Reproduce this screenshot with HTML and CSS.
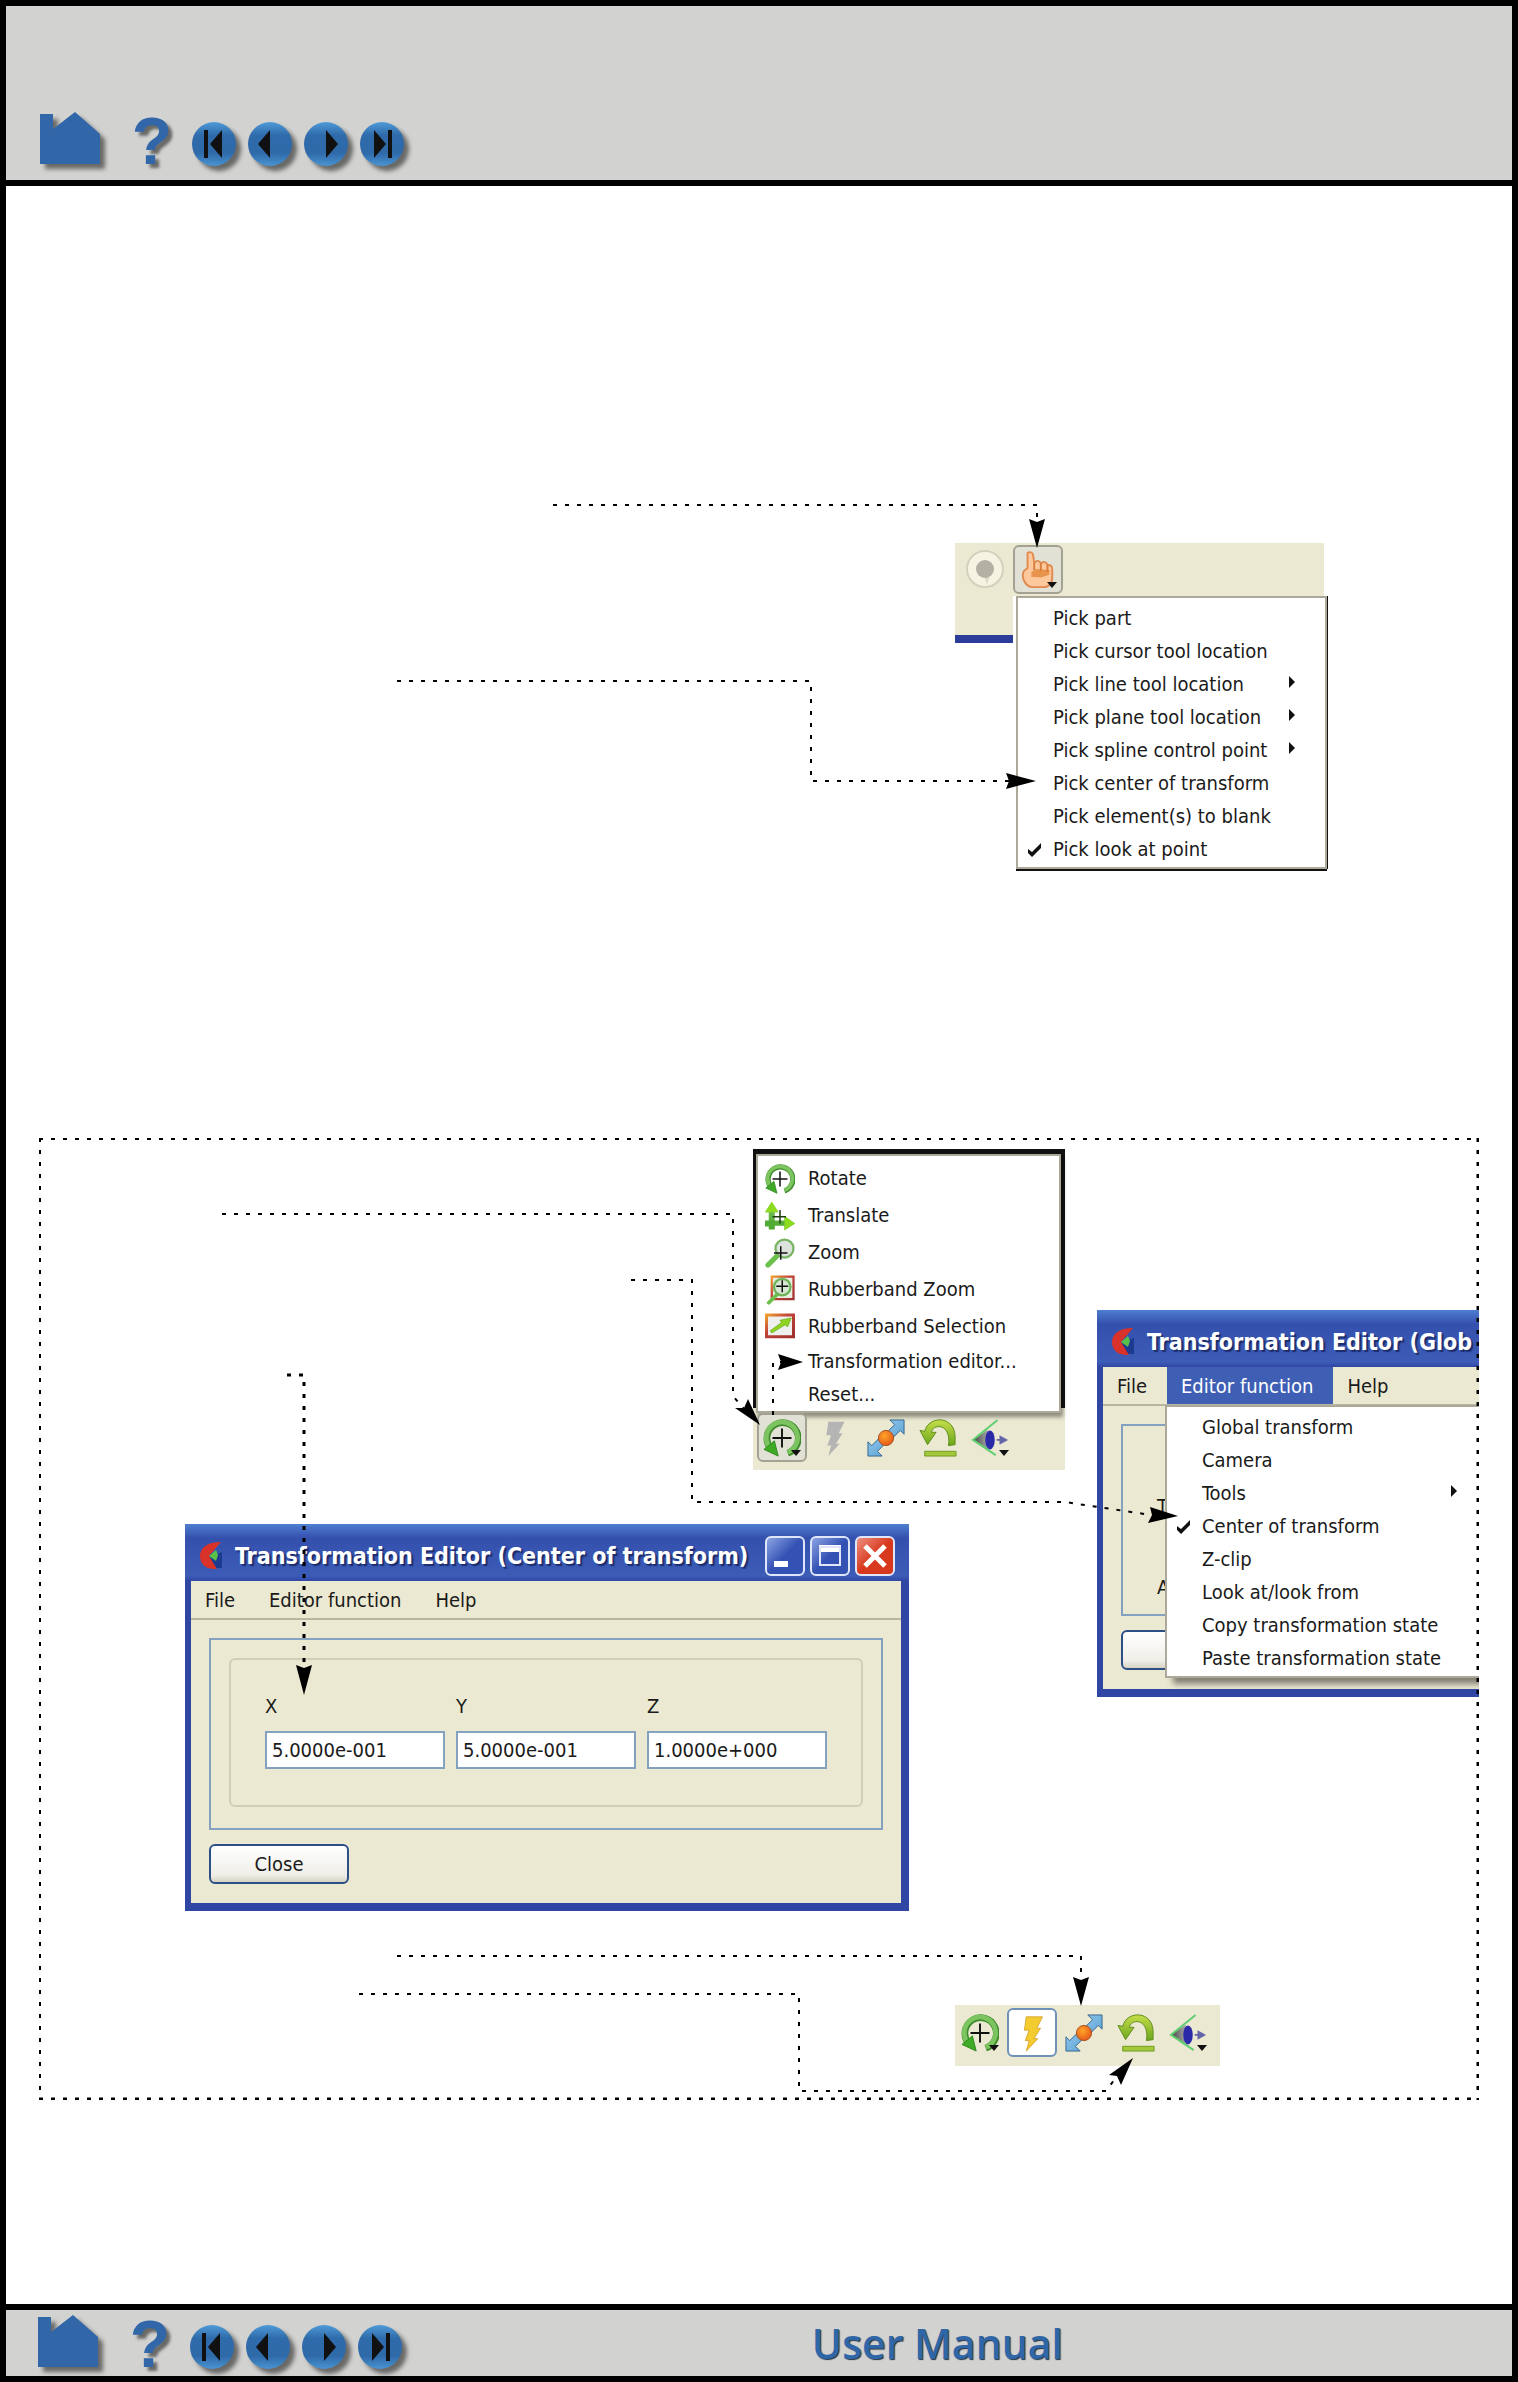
FILE: index.html
```html
<!DOCTYPE html>
<html lang="en">
<head>
<meta charset="utf-8">
<title>User Manual</title>
<link rel="stylesheet" href="styles.css">
</head>
<body>
<svg class="defs" width="0" height="0" aria-hidden="true">
  <defs>
    <linearGradient id="ball" x1="0" y1="0" x2="0" y2="1"><stop offset="0" stop-color="#4f9ad8"/><stop offset=".3" stop-color="#2f6bab"/><stop offset=".7" stop-color="#2f69a8"/><stop offset="1" stop-color="#4a94d2"/></linearGradient>
    <linearGradient id="green" x1="0" y1="0" x2="0" y2="1"><stop offset="0" stop-color="#7cc860"/><stop offset="1" stop-color="#4aa62c"/></linearGradient>
    <linearGradient id="lime" x1="0" y1="0" x2="0" y2="1"><stop offset="0" stop-color="#c6de4a"/><stop offset="1" stop-color="#6ba51c"/></linearGradient>
    <linearGradient id="warm" x1="0" y1="0" x2="1" y2="1"><stop offset="0" stop-color="#f0a030"/><stop offset=".4" stop-color="#c04438"/><stop offset="1" stop-color="#a03030"/></linearGradient>
    <linearGradient id="sky" x1="0" y1="0" x2="1" y2="1"><stop offset="0" stop-color="#a4d4f4"/><stop offset="1" stop-color="#4a94cc"/></linearGradient>
    <radialGradient id="orange" cx=".4" cy=".35" r=".7"><stop offset="0" stop-color="#ffa428"/><stop offset="1" stop-color="#e4561a"/></radialGradient>
    <linearGradient id="cone" x1="0" y1="0" x2="1" y2="0"><stop offset="0" stop-color="#444"/><stop offset="1" stop-color="#aaa"/></linearGradient>
    <symbol id="i-house" viewBox="0 0 60 54"><path fill="#3166a9" d="M0 2h13v15l22-17 25 22v30H0z"/></symbol>
    <symbol id="i-first" viewBox="0 0 44 44"><circle cx="22" cy="22" r="22" fill="url(#ball)"/><path fill="#111" d="M12 8h4v28h-4zM30 8v28L18 22z"/></symbol>
    <symbol id="i-prev" viewBox="0 0 44 44"><circle cx="22" cy="22" r="22" fill="url(#ball)"/><path fill="#111" d="M22 8v28L10 22z"/></symbol>
    <symbol id="i-next" viewBox="0 0 44 44"><circle cx="22" cy="22" r="22" fill="url(#ball)"/><path fill="#111" d="M22 8v28l12-14z"/></symbol>
    <symbol id="i-last" viewBox="0 0 44 44"><circle cx="22" cy="22" r="22" fill="url(#ball)"/><path fill="#111" d="M28 8h4v28h-4zM14 8v28l12-14z"/></symbol>
    <symbol id="i-rotate" viewBox="0 0 40 40"><path fill="none" stroke="#3f8a2c" stroke-width="7" d="M8 31A16.500 16.500 0 1 1 26 36"/><path fill="none" stroke="#7cc460" stroke-width="5" d="M8 31A16.500 16.500 0 1 1 26 35"/><path fill="#3faa26" stroke="#2f8a20" d="M1 32l11-9 4 16z"/><path stroke="#111" stroke-width="2" d="M10 20h20M20 10v20"/></symbol>
    <symbol id="i-translate" viewBox="0 0 40 40"><path fill="url(#green)" d="M5 38V15H0L9 1l9 14h-5v11h13v-6l14 10-14 9v-6H13v5z"/><path fill="#50ac34" d="M0 26h13v8H0z"/><path fill="#8ddc20" d="M0 15L9 1l9 14zM26 20l14 10-14 9z"/><path stroke="#1c3c14" stroke-width="2" d="M10 21h18M20 12v18"/></symbol>
    <symbol id="i-zoom" viewBox="0 0 40 40"><path stroke="#6cc04c" stroke-width="7" stroke-linecap="round" d="M4 36l14-14"/><circle cx="26" cy="14" r="12" fill="#dce2dc" stroke="#78b464" stroke-width="3"/><path stroke="#111" stroke-width="2" d="M12 20h18M21 11v18"/></symbol>
    <symbol id="i-rzoom" viewBox="0 0 40 40"><path fill="#e9efe4" stroke="url(#warm)" stroke-width="3" d="M9 2h29v30H9z"/><path stroke="#6cc04c" stroke-width="5" stroke-linecap="round" d="M5 37l12-12"/><circle cx="23" cy="16" r="11" fill="#d8e6d4" stroke="#6cb458" stroke-width="3"/><path stroke="#111" stroke-width="2" d="M15 15h16M23 7v16"/></symbol>
    <symbol id="i-rselect" viewBox="0 0 40 40"><path fill="#eef0ee" stroke="url(#warm)" stroke-width="4" d="M2 4h36v29H2z"/><path fill="#8fd420" stroke="#6cae20" d="M7 25l15-11-2-3 15-3-5 12-3-3L9 28z"/></symbol>
    <symbol id="i-boltpath" viewBox="0 0 40 40"><path d="M14 3h17l-6 12h4l-7 11h4L14 39l3-11h-4l4-11h-5z"/></symbol>
    <symbol id="i-diag" viewBox="0 0 40 40"><path fill="url(#sky)" stroke="#34648c" stroke-width="1" d="M24 1h15v15l-4-4-8 8-6-6 8-8zM16 39H1V24l4 4 8-8 6 6-8 8z"/><circle cx="20" cy="20" r="8" fill="url(#orange)" stroke="#a85020"/></symbol>
    <symbol id="i-undo" viewBox="0 0 40 40"><path fill="url(#lime)" stroke="#5f8c1c" d="M6 13C10-4 38-4 38 19v8l-7 1c2-12-3-20-10-20-5 0-7 3-8 6h5L9 27 1 12z"/><path fill="#a4c83c" stroke="#6f9a20" d="M6 34h33v5H6z"/></symbol>
    <symbol id="i-eye" viewBox="0 0 40 40"><path fill="url(#cone)" d="M2 22L18 11v22z"/><ellipse cx="20" cy="22" rx="5" ry="10" fill="#2a2aa8"/><path fill="none" stroke="#5fcf70" stroke-width="2" d="M28 1L2 22l24 16"/><path fill="#6464a8" d="M27 21h3v-4l9 5-9 5v-4h-3z"/></symbol>
    <symbol id="i-check" viewBox="0 0 16 16"><path fill="#111" d="M1 7l4 3 9-9v5l-9 9-4-4z"/></symbol>
    <symbol id="i-logo" viewBox="0 0 24 30"><path fill="#1b3a90" d="M11 15L23 11v16H13z"/><path fill="#d8322a" d="M22 1C8 1 1 7 1 15s6 14 17 13L10 15z"/><path fill="#59c048" d="M10 15l7-6 2 5-2 6z"/></symbol>
  </defs>
</svg>

<header class="bar bar-top">
  <nav class="nav" aria-label="Manual pages">
    <a href="#home" aria-label="Home"><svg class="house"><use href="#i-house"/></svg></a>
    <a class="help" href="#help">?</a>
    <span class="steps">
      <a href="#first" aria-label="First page"><svg class="step"><use href="#i-first"/></svg></a>
      <a href="#prev" aria-label="Previous page"><svg class="step"><use href="#i-prev"/></svg></a>
      <a href="#next" aria-label="Next page"><svg class="step"><use href="#i-next"/></svg></a>
      <a href="#last" aria-label="Last page"><svg class="step"><use href="#i-last"/></svg></a>
    </span>
  </nav>
</header>

<main>
  <figure class="fig fig-pick">
    <div class="pick">
      <div class="pick-bar">
        <svg class="knob" viewBox="0 0 40 40"><circle cx="20" cy="20" r="18" fill="#f5f4e3" stroke="#d2d1bd" stroke-width="2"/><path fill="#dcdbca" d="M18 22h8l-4 14z"/><circle cx="20" cy="20" r="9" fill="#b2b1a3"/></svg>
        <button class="tool pressed" type="button" aria-label="Pick">
          <svg class="icon" viewBox="0 0 40 40"><path fill="#fcc89c" stroke="#e08a50" stroke-width="2" stroke-linejoin="round" d="M9 2c3-2 6 0 6 3l1 8c2-4 6-3 7 0 3-3 6-1 7 2 3-1 5 1 5 4v8c0 8-4 11-10 11H14C8 38 4 31 4 26s2-6 5-8z"/><path fill="#e8944c" d="M13 22l5-3 14 1v5l-9 3-10-1z"/><path fill="none" stroke="#d87c3c" stroke-width="2" d="M16 13v7M23 13v8M30 15v7"/></svg>
          <span class="drop"></span>
        </button>
      </div>
      <div class="pick-body">
        <div class="pick-edge"></div>
        <ul class="menu pick-menu">
          <li>Pick part</li>
          <li>Pick cursor tool location</li>
          <li class="sub">Pick line tool location</li>
          <li class="sub">Pick plane tool location</li>
          <li class="sub">Pick spline control point</li>
          <li>Pick center of transform</li>
          <li>Pick element(s) to blank</li>
          <li><svg class="check"><use href="#i-check"/></svg>Pick look at point</li>
        </ul>
      </div>
    </div>
    <svg class="arrows" aria-hidden="true">
      <path class="lead" d="M514 19H998V36M358 195H772V295H970"/>
      <path d="M990 33l8 3 8-3-8 29zM967 287l3 8-3 8 30-8z"/>
    </svg>
  </figure>

  <figure class="fig fig-transform">
    <div class="modes">
      <div class="modes-back">
        <ul class="modes-menu">
          <li class="tall"><svg class="small"><use href="#i-rotate"/></svg>Rotate</li>
          <li class="tall"><svg class="small"><use href="#i-translate"/></svg>Translate</li>
          <li class="tall"><svg class="small"><use href="#i-zoom"/></svg>Zoom</li>
          <li class="tall"><svg class="small"><use href="#i-rzoom"/></svg>Rubberband Zoom</li>
          <li class="tall"><svg class="small"><use href="#i-rselect"/></svg>Rubberband Selection</li>
          <li>Transformation editor...</li>
          <li>Reset...</li>
        </ul>
      </div>
      <div class="toolbar">
        <button class="tool pressed" type="button" aria-label="Rotate"><svg class="icon"><use href="#i-rotate"/></svg><span class="drop"></span></button>
        <button class="tool" type="button" aria-label="Fast display" disabled><svg class="icon bolt-off"><use href="#i-boltpath"/></svg></button>
        <button class="tool" type="button" aria-label="Fit"><svg class="icon"><use href="#i-diag"/></svg></button>
        <button class="tool" type="button" aria-label="Undo"><svg class="icon"><use href="#i-undo"/></svg></button>
        <button class="tool" type="button" aria-label="View"><svg class="icon"><use href="#i-eye"/></svg><span class="drop"></span></button>
      </div>
    </div>

    <section class="window win-global">
      <div class="title"><svg class="logo"><use href="#i-logo"/></svg><span>Transformation Editor (Glob</span></div>
      <div class="client">
        <div class="menubar"><a href="#f1">File</a><a class="open" href="#e1">Editor function</a><a href="#h1">Help</a></div>
        <div class="body">
          <div class="panel side"><span>T</span><span>A</span></div>
          <button class="push" type="button" aria-label="Close"></button>
        </div>
        <ul class="menu drop-menu">
          <li>Global transform</li>
          <li>Camera</li>
          <li class="sub">Tools</li>
          <li><svg class="check"><use href="#i-check"/></svg>Center of transform</li>
          <li>Z-clip</li>
          <li>Look at/look from</li>
          <li>Copy transformation state</li>
          <li>Paste transformation state</li>
        </ul>
      </div>
    </section>

    <section class="window win-center">
      <div class="title"><svg class="logo"><use href="#i-logo"/></svg><span>Transformation Editor (Center of transform)</span>
        <div class="caption">
          <button type="button" aria-label="Minimize"><svg viewBox="0 0 36 36"><path fill="#fff" d="M7 23h14v6H7z"/></svg></button>
          <button type="button" aria-label="Maximize"><svg viewBox="0 0 36 36"><path fill="#fff" d="M7 7h22v7H7z"/><path fill="none" stroke="#dfe6fa" stroke-width="2" d="M8 9h20v18H8z"/></svg></button>
          <button class="x" type="button" aria-label="Close window"><svg viewBox="0 0 36 36"><path stroke="#fff" stroke-width="5" d="M8 8l20 20M28 8L8 28"/></svg></button>
        </div>
      </div>
      <div class="client">
        <div class="menubar"><a href="#f2">File</a><a href="#e2">Editor function</a><a href="#h2">Help</a></div>
        <div class="body">
          <div class="panel">
            <div class="group">
              <label>X<input type="text" value="5.0000e-001"></label>
              <label>Y<input type="text" value="5.0000e-001"></label>
              <label>Z<input type="text" value="1.0000e+000"></label>
            </div>
          </div>
          <button class="push" type="button">Close</button>
        </div>
      </div>
    </section>

    <div class="toolbar quick">
      <button class="tool" type="button" aria-label="Rotate"><svg class="icon"><use href="#i-rotate"/></svg><span class="drop"></span></button>
      <button class="tool on" type="button" aria-label="Fast display"><svg class="icon bolt-on"><use href="#i-boltpath"/></svg></button>
      <button class="tool" type="button" aria-label="Fit"><svg class="icon"><use href="#i-diag"/></svg></button>
      <button class="tool" type="button" aria-label="Undo"><svg class="icon"><use href="#i-undo"/></svg></button>
      <button class="tool" type="button" aria-label="View"><svg class="icon"><use href="#i-eye"/></svg><span class="drop"></span></button>
    </div>

    <svg class="arrows" aria-hidden="true">
      <line class="frame" x1="0" y1="1" x2="100%" y2="1"/>
      <line class="frame" x1="1" y1="0" x2="1" y2="100%"/>
      <line class="frame edge" x1="100%" y1="0" x2="100%" y2="100%"/>
      <line class="frame edge" x1="0" y1="100%" x2="100%" y2="100%"/>
      <path class="lead" d="M183 76H694V258L706 272M592 142H653V364H1026L1112 377M358 818H1042V840M320 856H760V953H1067L1078 938M734 277V224H742"/>
      <path class="lead thick" d="M248 237H265V530"/>
      <path d="M257 527l8 3 8-3-8 30zM696 270l9 0 4-9 12 26zM1111 369l2 8-4 8 30-7zM739 216l3 8-3 8 25-8zM1034 839l8 3 8-3-8 29zM1070 937l8 1 4 9 12-27z"/>
    </svg>
  </figure>
</main>

<footer class="bar bar-bottom">
  <nav class="nav" aria-label="Manual pages, bottom">
    <a href="#home" aria-label="Home"><svg class="house"><use href="#i-house"/></svg></a>
    <a class="help" href="#help">?</a>
    <span class="steps">
      <a href="#first" aria-label="First page"><svg class="step"><use href="#i-first"/></svg></a>
      <a href="#prev" aria-label="Previous page"><svg class="step"><use href="#i-prev"/></svg></a>
      <a href="#next" aria-label="Next page"><svg class="step"><use href="#i-next"/></svg></a>
      <a href="#last" aria-label="Last page"><svg class="step"><use href="#i-last"/></svg></a>
    </span>
  </nav>
  <div class="manual">User Manual</div>
</footer>
</body>
</html>
```
FILE: styles.css
```css
* { box-sizing: border-box; }
body {
  margin: 0;
  min-height: 100vh;
  display: flex;
  flex-direction: column;
  border: 6px solid #000;
  background: #fff;
  color: #1a1a1a;
  font: 20px/33px "DejaVu Sans Condensed", "Noto Sans", sans-serif;
}
svg { display: block; }
ul { list-style: none; margin: 0; padding: 0; }
a { color: inherit; text-decoration: none; }
button { font: inherit; color: inherit; padding: 0; margin: 0; border: 0; background: none; }
.defs { position: absolute; }

/* page bars */
.bar { background: #d2d2d0; }
.bar-top {
  min-height: 180px;
  display: flex;
  align-items: flex-end;
  padding: 0 34px 14px;
  border-bottom: 6px solid #000;
}
.bar-bottom {
  min-height: 72px;
  display: grid;
  grid-template-columns: 535fr 465fr;
  align-items: end;
  border-top: 6px solid #000;
}
.bar-bottom .nav { padding: 0 32px 7px; }
.nav { display: flex; align-items: flex-end; }
.nav svg { filter: drop-shadow(5px 5px 2px rgba(0, 0, 0, .5)); }
.house { width: 60px; height: 54px; }
.help {
  width: 92px;
  padding-left: 12px;
  text-align: center;
  color: #3166a9;
  font: bold 66px/50px "Liberation Sans", sans-serif;
  text-shadow: 4px 4px 3px rgba(0, 0, 0, .5);
}
.steps { display: flex; gap: 12px; }
.step { width: 44px; height: 44px; }
.manual {
  color: #2f66a8;
  font: 600 41px/66px "Open Sans", sans-serif;
  text-shadow: 1px 1px 1px #234;
}

/* figures */
main {
  flex: 1;
  display: flex;
  flex-direction: column;
  gap: 252px;
  padding: 300px 33px 204px;
}
.fig { position: relative; margin: 0; }
.fig-pick { height: 400px; }
.fig-transform { height: 962px; overflow: hidden; }
.arrows { position: absolute; left: 0; top: 0; width: 100%; height: 100%; pointer-events: none; }
.frame, .lead { fill: none; stroke: #000; stroke-width: 2; stroke-dasharray: 4 8; }
.edge { stroke-width: 5; }
.thick { stroke-width: 3; }

/* menus */
.menu { background: #fff; }
.menu li { position: relative; padding-left: 35px; white-space: nowrap; }
.check { position: absolute; left: 9px; top: 9px; width: 16px; height: 16px; }
.sub::after {
  content: "";
  position: absolute;
  right: 30px;
  top: 8px;
  border: solid transparent;
  border-width: 6px 0 6px 6px;
  border-left-color: #111;
}

/* tool buttons */
.tool {
  position: relative;
  width: 50px;
  height: 49px;
  display: grid;
  place-items: center;
  border: 2px solid transparent;
  border-radius: 6px;
}
.pressed { background: #e2e1d6; border-color: #a3a292; }
.on { background: #fff; border-color: #6f93b8; }
.icon { width: 38px; height: 38px; }
.bolt-off { fill: #b4b4b4; }
.bolt-on { fill: #f4cc30; stroke: #d8a830; }
.drop {
  position: absolute;
  right: 4px;
  bottom: 4px;
  border: solid transparent;
  border-width: 6px 5px 0;
  border-top-color: #111;
}
.toolbar { display: flex; gap: 2px; background: #ebe9d2; }

/* pick menu */
.pick { position: absolute; left: 916px; top: 57px; width: 372px; }
.pick-bar {
  display: flex;
  gap: 8px;
  width: 369px;
  height: 53px;
  padding: 2px 10px;
  background: #ebe9d2;
}
.knob { width: 40px; height: 40px; margin-top: 4px; }
.pick-body { display: flex; gap: 3px; }
.pick-edge {
  width: 58px;
  height: 47px;
  background: #ebe9d2;
  border-bottom: 8px solid #2c3c9a;
}
.pick-menu {
  flex: 1;
  padding: 4px 0 1px;
  border: 2px solid #aca99a;
  box-shadow: 0 2px 0 #111, 1px 0 0 #111;
}

/* transform modes */
.modes { position: absolute; left: 714px; top: 11px; width: 312px; }
.modes-back { padding: 5px 4px 0 3px; background: #111; }
.modes-menu {
  position: relative;
  margin-bottom: -5px;
  padding-top: 4px;
  background: #fff;
  border: 2px solid #aca99a;
  box-shadow: 2px 4px 4px rgba(0, 0, 0, .4);
}
.modes-menu li { padding-left: 50px; }
.modes-menu .tall { display: flex; align-items: center; gap: 13px; height: 37px; padding-left: 7px; }
.small { width: 30px; height: 30px; }
.modes .toolbar { height: 62px; padding: 5px 4px 0; }

/* windows */
.window {
  position: absolute;
  padding: 0 8px 8px 6px;
  background: linear-gradient(#4f7fd0, #3450ae 14px, #3c5cb6 52px, #3046a4 57px);
}
.win-global { left: 1058px; top: 172px; width: 724px; }
.win-center { left: 146px; top: 386px; width: 724px; }
.title {
  display: flex;
  align-items: center;
  height: 57px;
  padding: 6px 6px 0 8px;
  color: #fff;
  font: bold 23px/32px "DejaVu Sans Condensed", sans-serif;
  text-shadow: 2px 2px 1px #1c2c6c;
  white-space: nowrap;
}
.logo { width: 24px; height: 30px; margin-right: 12px; }
.caption { display: flex; gap: 5px; margin-left: auto; }
.caption button {
  width: 40px;
  height: 40px;
  border: 2px solid #dfe6fa;
  border-radius: 6px;
  background: linear-gradient(135deg, #8ca4e4, #3452b4 50%);
}
.caption .x { background: linear-gradient(135deg, #ee9080, #d8391e 50%); }
.client { position: relative; height: 322px; background: #ebe9d2; }
.menubar { display: flex; height: 39px; border-bottom: 2px solid #b9b7a0; }
.menubar a { padding: 3px 14px 0; margin-right: 6px; }
.menubar .open { margin: 0; padding: 3px 20px 0 14px; color: #fff; background: #3f5fb5; }
.body { padding: 18px 18px 0; }
.panel { height: 192px; padding: 18px; border: 2px solid #84a2c0; }
.group {
  display: flex;
  gap: 11px;
  height: 149px;
  padding: 30px 34px 0;
  border: 2px solid #d0ceb6;
  border-radius: 6px;
}
.group label { display: flex; flex-direction: column; gap: 8px; width: 180px; }
.group input {
  width: 100%;
  height: 38px;
  padding: 0 5px;
  border: 2px solid #84a2c0;
  background: #fff;
  color: inherit;
  font: inherit;
}
.side { display: flex; flex-direction: column; gap: 48px; padding: 64px 34px 0; }
.push {
  display: block;
  width: 140px;
  height: 40px;
  margin-top: 14px;
  border: 2px solid #2c4f86;
  border-radius: 6px;
  background: linear-gradient(#fff, #efeee8 80%, #d8d4c4);
}
.drop-menu {
  position: absolute;
  left: 62px;
  top: 38px;
  width: 330px;
  padding: 4px 0 1px;
  border: 2px solid #aca99a;
  box-shadow: 8px 6px 6px rgba(0, 0, 0, .45);
}
.drop-menu .sub::after { right: 36px; }

.quick { position: absolute; left: 916px; top: 867px; width: 265px; height: 61px; padding-top: 3px; }
```
